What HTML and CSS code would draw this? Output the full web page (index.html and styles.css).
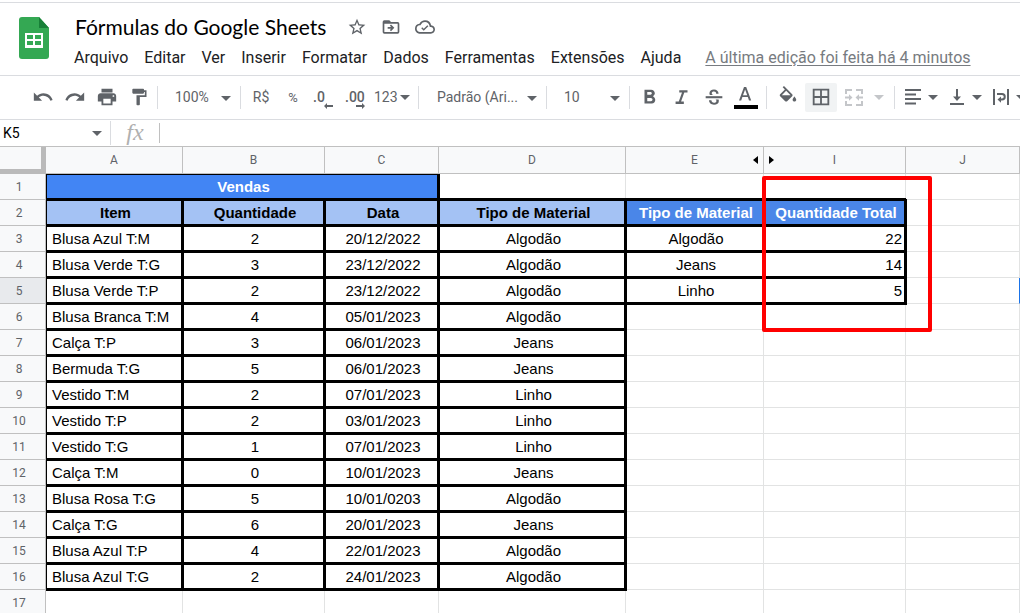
FILE: index.html
```html
<!DOCTYPE html>
<html lang="pt-BR">
<head>
<meta charset="utf-8">
<title>Fórmulas do Google Sheets</title>
<link rel="stylesheet" href="styles.css">
</head>
<body>
<header class="top">
  <a class="logo" href="#" aria-label="Planilhas">
    <svg width="30" height="42" viewBox="0 0 30 42"><path d="M3 0h17l10 11v28a3 3 0 0 1-3 3H3a3 3 0 0 1-3-3V3a3 3 0 0 1 3-3z" fill="#34a853"/><path d="M20 0l10 11H20z" fill="#188038"/><path d="M6 16h18v15H6zM8 18v4h6v-4zm8 0v4h6v-4zm-8 6v4h6v-4zm8 0v4h6v-4z" fill="#fff" fill-rule="evenodd"/></svg>
  </a>
  <div class="heading">
    <div class="title-row">
      <h1 class="title">Fórmulas do Google Sheets</h1>
      <button class="title-btn" aria-label="Marcar com estrela"><svg width="20" height="20" viewBox="0 0 24 24"><path d="M22 9.24l-7.19-.62L12 2 9.19 8.63 2 9.24l5.46 4.73L5.82 21 12 17.27 18.18 21l-1.63-7.03L22 9.24zM12 15.4l-3.76 2.27 1-4.28-3.32-2.88 4.38-.38L12 6.1l1.71 4.04 4.38.38-3.32 2.88 1 4.28L12 15.4z"/></svg></button>
      <button class="title-btn" aria-label="Mover"><svg width="20" height="20" viewBox="0 0 24 24"><path d="M20 6h-8l-2-2H4a2 2 0 0 0-2 2v12a2 2 0 0 0 2 2h16a2 2 0 0 0 2-2V8a2 2 0 0 0-2-2zm0 12H4V8h16v10z"/><path d="M8 12h4.2l-1.6-1.6L12 9l4 4-4 4-1.400-1.400 1.600-1.600H8z"/></svg></button>
      <button class="title-btn" aria-label="Salvo no Drive"><svg width="20" height="20" viewBox="0 0 24 24"><path d="M19.350 10.040A7.490 7.490 0 0 0 12 4C9.110 4 6.600 5.640 5.350 8.040A5.994 5.994 0 0 0 0 14c0 3.310 2.690 6 6 6h13c2.760 0 5-2.240 5-5 0-2.640-2.050-4.780-4.650-4.960zM19 18H6c-2.210 0-4-1.790-4-4 0-2.050 1.530-3.760 3.560-3.970l1.070-.11.5-.95A5.469 5.469 0 0 1 12 6c2.620 0 4.880 1.860 5.390 4.430l.3 1.500 1.530.11A2.980 2.980 0 0 1 22 15c0 1.650-1.350 3-3 3z"/><path d="M10.500 16.500L7.500 13.500l1.200-1.200 1.800 1.800 4.300-4.300 1.200 1.200z"/></svg></button>
    </div>
    <nav class="menu">
      <button>Arquivo</button><button>Editar</button><button>Ver</button><button>Inserir</button><button>Formatar</button><button>Dados</button><button>Ferramentas</button><button>Extensões</button><button>Ajuda</button>
      <a class="last-edit" href="#">A última edição foi feita há 4 minutos</a>
    </nav>
  </div>
</header>

<div class="toolbar" role="toolbar" aria-label="Formatação">
  <div class="group history">
    <button class="tool" aria-label="Desfazer"><svg width="22" height="22" viewBox="0 0 24 24"><path d="M12.500 8c-2.650 0-5.050.99-6.900 2.600L2 7v9h9l-3.620-3.620c1.390-1.160 3.160-1.880 5.120-1.880 3.540 0 6.550 2.310 7.600 5.500l2.370-.78C21.080 11.030 17.150 8 12.500 8z"/></svg></button>
    <button class="tool" aria-label="Refazer"><svg width="22" height="22" viewBox="0 0 24 24"><path d="M18.400 10.600C16.550 8.990 14.150 8 11.500 8c-4.650 0-8.580 3.030-9.960 7.220L3.900 16c1.050-3.190 4.050-5.500 7.600-5.500 1.950 0 3.730.72 5.120 1.880L13 16h9V7l-3.600 3.600z"/></svg></button>
    <button class="tool" aria-label="Imprimir"><svg width="22" height="22" viewBox="0 0 24 24"><path d="M19 8H5c-1.660 0-3 1.340-3 3v6h4v4h12v-4h4v-6c0-1.660-1.340-3-3-3zm-3 11H8v-5h8v5zm3-7c-.55 0-1-.45-1-1s.45-1 1-1 1 .45 1 1-.45 1-1 1zm-1-9H6v4h12V3z"/></svg></button>
    <button class="tool" aria-label="Pintar formatação"><svg width="20" height="20" viewBox="0 0 24 24"><path d="M18 4V3c0-.55-.45-1-1-1H5c-.55 0-1 .45-1 1v4c0 .55.45 1 1 1h12c.55 0 1-.45 1-1V6h1v4H9v11c0 .55.45 1 1 1h2c.55 0 1-.45 1-1v-9h8V4h-3z"/></svg></button>
  </div>
  <div class="group zoom"><label class="pick"><select aria-label="Zoom"><option>100%</option></select></label></div>
  <div class="group numbers">
    <button class="tool">R$</button>
    <button class="tool small">%</button>
    <button class="tool decimal" aria-label="Diminuir casas decimais"><span>.0</span><svg width="9" height="6" viewBox="0 0 9 6"><path d="M0 3l3-3v2h6v2H3v2z"/></svg></button>
    <button class="tool decimal" aria-label="Aumentar casas decimais"><span>.00</span><svg width="9" height="6" viewBox="0 0 9 6"><path d="M9 3L6 0v2H0v2h6v2z"/></svg></button>
    <button class="tool format">123<i class="caret"></i></button>
  </div>
  <div class="group font"><label class="pick"><select aria-label="Fonte"><option>Padrão (Ari...</option></select></label></div>
  <div class="group size"><label class="pick"><select aria-label="Tamanho da fonte"><option>10</option></select></label></div>
  <div class="group style">
    <button class="tool" aria-label="Negrito"><svg width="22" height="22" viewBox="0 0 24 24"><path d="M15.600 10.790c.97-.67 1.650-1.770 1.650-2.790 0-2.260-1.750-4-4-4H6v15h8.040c2.090 0 3.710-1.700 3.710-3.790 0-1.520-.86-2.820-2.150-3.420zM9 6.500h3.500c.83 0 1.500.67 1.500 1.500s-.67 1.500-1.500 1.500H9v-3zm4 10H9v-3.500h4c.96 0 1.750.79 1.750 1.750S13.960 16.500 13 16.500z"/></svg></button>
    <button class="tool" aria-label="Itálico"><svg width="22" height="22" viewBox="0 0 24 24"><path d="M9 4.500V7h3l-3.500 10H5v2.500h9V17h-3l3.500-10H18V4.500z"/></svg></button>
    <button class="tool" aria-label="Tachado"><svg width="20" height="20" viewBox="0 0 24 24"><path d="M2 11h20v2.500H2z"/><path d="M17.500 8c0-3-2.300-5-5.500-5S6.500 4.700 6.500 7.500c0 .9.200 1.600.6 2.200h4.200C9.800 9.200 9.300 8.500 9.300 7.500c0-1.300 1-2.100 2.700-2.100s2.600.9 2.600 2.600zM6 16c0 3.200 2.600 5.300 6 5.300s5.800-1.600 5.800-4.600c0-.7-.1-1.200-.3-1.700h-3.700c.7.4 1.100.9 1.100 1.700 0 1.400-1.100 2.200-2.900 2.200S8.900 18 8.900 16z"/></svg></button>
    <button class="tool" aria-label="Cor do texto"><svg width="24" height="28" viewBox="0 0 24 28"><path d="M10 4L5 17.500h2.200l1.200-3.400h5.400l1.200 3.400h2.200L12.200 4zm1.100 2.500l2.100 5.800H9z"/><path d="M0 22h24v4H0z" fill="#000"/></svg></button>
  </div>
  <div class="group fill">
    <button class="tool" aria-label="Cor de preenchimento"><svg width="22" height="22" viewBox="0 0 24 24"><path d="M16.560 8.940L7.620 0 6.210 1.410l2.380 2.380-5.150 5.150c-.59.59-.59 1.540 0 2.120l5.500 5.500c.29.29.68.44 1.060.44s.77-.15 1.060-.44l5.500-5.500c.59-.58.59-1.530 0-2.120zM5.210 10L10 5.210 14.790 10H5.210zM19 11.500s-2 2.170-2 3.500c0 1.100.9 2 2 2s2-.9 2-2c0-1.330-2-3.500-2-3.500z"/></svg></button>
    <button class="tool active" aria-label="Bordas"><svg width="22" height="22" viewBox="0 0 24 24"><path d="M3 3v18h18V3H3zm8 16H5v-6h6v6zm0-8H5V5h6v6zm8 8h-6v-6h6v6zm0-8h-6V5h6v6z"/></svg></button>
    <button class="tool" disabled aria-label="Mesclar células"><svg width="18" height="17" viewBox="0 0 18 17"><path d="M0 0h7v2H2v3H0zM11 0h7v5h-2V2h-5zM0 12h2v3h5v2H0zM16 12h2v5h-7v-2h5zM0 7.500h4V5.200l3.500 3.300L4 11.800V9.500H0zM18 7.500h-4V5.200l-3.500 3.300 3.500 3.300V9.500h4z"/></svg></button>
    <button class="tool mini" disabled aria-label="Tipo de mesclagem"><i class="caret"></i></button>
  </div>
  <div class="group align">
    <button class="tool drop" aria-label="Alinhamento horizontal"><svg width="16" height="16" viewBox="0 0 16 16"><path d="M0 0h16v2H0zM0 4.500h11v2H0zM0 9h16v2H0zM0 13.500h11v2H0z"/></svg><i class="caret"></i></button>
    <button class="tool drop" aria-label="Alinhamento vertical"><svg width="16" height="16" viewBox="0 0 16 16"><path d="M1 14h14v2H1zM7 0h2v7.500h3L8 12 4 7.500h3z"/></svg><i class="caret"></i></button>
    <button class="tool drop" aria-label="Ajuste de texto"><svg width="16" height="16" viewBox="0 0 16 16"><path d="M0 0h2v16H0zM14 0h2v16h-2zM4 4h5a3.500 3.500 0 0 1 0 7.500H8v2.300L4.500 10.500 8 7.500v2h1A1.700 1.700 0 0 0 9 6H4z"/></svg><i class="caret"></i></button>
  </div>
</div>

<div class="formula-bar">
  <div class="name-box"><input aria-label="Caixa de nome" value="K5"><button aria-label="Intervalos nomeados"><i class="caret"></i></button></div>
  <label class="fx" for="formula">fx</label>
  <input class="formula" id="formula" autocomplete="off">
</div>

<main class="sheet">
  <table class="grid">
    <colgroup><col class="c-head"><col class="c-a"><col class="c-b"><col class="c-c"><col class="c-d"><col class="c-e"><col class="c-i"><col></colgroup>
    <thead><tr><td class="corner"></td><th>A</th><th>B</th><th>C</th><th>D</th><th>E<button class="reveal left" aria-label="Mostrar colunas F a H"></button></th><th>I<button class="reveal right" aria-label="Mostrar colunas F a H"></button></th><th>J</th></tr></thead>
    <tbody>
      <tr><th>1</th><td class="box banner" colspan="3">Vendas</td><td></td><td></td><td></td><td></td></tr>
      <tr><th>2</th><td class="box light">Item</td><td class="box light">Quantidade</td><td class="box light">Data</td><td class="box light">Tipo de Material</td><td class="box blue">Tipo de Material</td><td class="box blue">Quantidade Total</td><td></td></tr>
      <tr><th>3</th><td class="box item">Blusa Azul T:M</td><td class="box">2</td><td class="box">20/12/2022</td><td class="box">Algodão</td><td class="box">Algodão</td><td class="box total">22</td><td></td></tr>
      <tr><th>4</th><td class="box item">Blusa Verde T:G</td><td class="box">3</td><td class="box">23/12/2022</td><td class="box">Algodão</td><td class="box">Jeans</td><td class="box total">14</td><td></td></tr>
      <tr><th class="current">5</th><td class="box item">Blusa Verde T:P</td><td class="box">2</td><td class="box">23/12/2022</td><td class="box">Algodão</td><td class="box">Linho</td><td class="box total">5</td><td class="by-cursor"></td></tr>
      <tr><th>6</th><td class="box item">Blusa Branca T:M</td><td class="box">4</td><td class="box">05/01/2023</td><td class="box">Algodão</td><td></td><td></td><td></td></tr>
      <tr><th>7</th><td class="box item">Calça T:P</td><td class="box">3</td><td class="box">06/01/2023</td><td class="box">Jeans</td><td></td><td></td><td></td></tr>
      <tr><th>8</th><td class="box item">Bermuda T:G</td><td class="box">5</td><td class="box">06/01/2023</td><td class="box">Jeans</td><td></td><td></td><td></td></tr>
      <tr><th>9</th><td class="box item">Vestido T:M</td><td class="box">2</td><td class="box">07/01/2023</td><td class="box">Linho</td><td></td><td></td><td></td></tr>
      <tr><th>10</th><td class="box item">Vestido T:P</td><td class="box">2</td><td class="box">03/01/2023</td><td class="box">Linho</td><td></td><td></td><td></td></tr>
      <tr><th>11</th><td class="box item">Vestido T:G</td><td class="box">1</td><td class="box">07/01/2023</td><td class="box">Linho</td><td></td><td></td><td></td></tr>
      <tr><th>12</th><td class="box item">Calça T:M</td><td class="box">0</td><td class="box">10/01/2023</td><td class="box">Jeans</td><td></td><td></td><td></td></tr>
      <tr><th>13</th><td class="box item">Blusa Rosa T:G</td><td class="box">5</td><td class="box">10/01/0203</td><td class="box">Algodão</td><td></td><td></td><td></td></tr>
      <tr><th>14</th><td class="box item">Calça T:G</td><td class="box">6</td><td class="box">20/01/2023</td><td class="box">Jeans</td><td></td><td></td><td></td></tr>
      <tr><th>15</th><td class="box item">Blusa Azul T:P</td><td class="box">4</td><td class="box">22/01/2023</td><td class="box">Algodão</td><td></td><td></td><td></td></tr>
      <tr><th>16</th><td class="box item">Blusa Azul T:G</td><td class="box">2</td><td class="box">24/01/2023</td><td class="box">Algodão</td><td></td><td></td><td></td></tr>
      <tr><th>17</th><td></td><td></td><td></td><td></td><td></td><td></td><td></td></tr>
    </tbody>
  </table>
  <div class="highlight"></div>
</main>
</body>
</html>
```
FILE: styles.css
```css
* { box-sizing: border-box; }
body {
  margin: 0;
  height: 100vh;
  display: flex;
  flex-direction: column;
  overflow: hidden;
  background: #fff;
  color: #202124;
  font-family: Roboto, sans-serif;
}
button, input, select {
  font: inherit;
  color: inherit;
  border: 0;
  padding: 0;
  margin: 0;
  background: none;
  outline: 0;
}
svg { display: block; fill: currentColor; flex: none; }

/* Title and menus */
.top {
  display: flex;
  flex: none;
  margin-top: 2px;
  height: 74px;
  padding: 9px 20px 0 19px;
  border-top: 1px solid #dadce0;
  border-bottom: 1px solid #dadce0;
}
.logo { padding-top: 5px; }
.heading { padding-left: 25px; }
.title-row { display: flex; align-items: center; height: 29px; color: #5f6368; }
.title {
  margin: 0 14px 0 1px;
  font: 400 21px/28px Lato, sans-serif;
  color: #000;
  white-space: nowrap;
}
.title-btn { width: 34px; height: 28px; display: flex; align-items: center; justify-content: center; }
.menu { display: flex; gap: 16px; height: 32px; align-items: center; font-size: 16px; white-space: nowrap; }
.last-edit { margin-left: 8px; color: #777b80; text-underline-offset: 2px; }

/* Toolbar */
.toolbar {
  display: flex;
  flex: none;
  align-items: center;
  height: 44px;
  padding-bottom: 1px;
  border-bottom: 1px solid #dadce0;
  color: #5f6368;
  font-size: 14px;
  overflow: hidden;
}
.group { display: flex; flex: none; align-items: center; height: 23px; border-right: 1px solid #dadce0; }
.tool {
  display: flex;
  flex: none;
  align-items: center;
  justify-content: center;
  width: 32px;
  height: 29px;
  border-radius: 2px;
}
.tool:disabled { color: #c4c6c9; }
.tool.active { background: #f1f3f4; }
.small { font-size: 13px; }
.caret {
  flex: none;
  border: 5px solid transparent;
  border-top-color: currentColor;
  border-bottom: 0;
}
.history { width: 158px; padding-left: 27px; }
.zoom { width: 83px; padding-left: 17px; }
.numbers { width: 178px; padding-left: 4px; }
.font { width: 128px; padding-left: 18px; }
.size { width: 83px; padding-left: 17px; }
.style { width: 137px; padding-left: 4px; }
.fill { width: 128px; padding-left: 5px; gap: 1px; }
.align { padding-left: 10px; border: 0; }
.pick { position: relative; width: 100%; }
.pick select { width: 100%; appearance: none; }
.pick::after {
  content: "";
  position: absolute;
  right: 9px;
  top: 7px;
  border: 5px solid transparent;
  border-top-color: #5f6368;
  border-bottom: 0;
  pointer-events: none;
}
.decimal { position: relative; justify-content: flex-start; padding-left: 4px; font-weight: 500; }
.decimal svg { position: absolute; right: 8px; bottom: 3px; }
.tool.format { width: 44px; gap: 2px; justify-content: flex-start; padding-left: 1px; }
.tool.mini { width: 16px; }
.tool.drop { width: 44px; gap: 7px; justify-content: flex-start; }

/* Formula bar */
.formula-bar { display: flex; flex: none; align-items: center; height: 27px; border-bottom: 1px solid #c0c0c0; }
.name-box {
  display: flex;
  align-items: center;
  width: 111px;
  height: 24px;
  padding: 0 8px 0 3px;
  border-right: 1px solid #dadce0;
  font-size: 14px;
  color: #000;
}
.name-box input { flex: 1; min-width: 0; }
.name-box .caret { display: block; color: #5f6368; }
.fx {
  width: 49px;
  height: 20px;
  border-right: 1px solid #c0c0c0;
  text-align: center;
  font: italic 24px/18px "Liberation Serif", serif;
  color: #b0b0b0;
}
.formula { flex: 1; padding: 0 8px; font-size: 14px; }

/* Grid */
.sheet { position: relative; flex: 1; min-height: 0; overflow: hidden; }
.grid {
  width: 100%;
  table-layout: fixed;
  border-collapse: separate;
  border-spacing: 0;
  font: 15px/20px "Liberation Sans", Arial, sans-serif;
  color: #000;
}
.c-head { width: 46px; }
.c-a { width: 137px; }
.c-b { width: 142px; }
.c-c { width: 114px; }
.c-d { width: 187px; }
.c-e { width: 138px; }
.c-i { width: 142px; }
.grid td, .grid th {
  height: 26px;
  padding: 0 0 0 3px;
  border: solid #e2e3e3;
  border-width: 0 1px 1px 0;
  text-align: center;
  white-space: nowrap;
}
.grid thead tr > * { height: 27px; }
.grid th, .grid .corner {
  position: relative;
  z-index: 2;
  padding: 0;
  background: #f8f9fa;
  border-color: #c0c0c0;
  color: #5f6368;
  font: 12px/20px Roboto, sans-serif;
}
.grid tbody th { padding-right: 7px; }
.grid .corner { border-width: 0 5px 5px 0; border-color: #bababa; }
.grid .current { background: #e8eaed; }

/* Thick outlines reach one pixel past the gridline on every side */
.grid .box {
  position: relative;
  z-index: 1;
  border-color: #000;
  box-shadow: inset 0 0 0 1px #000, 0 0 0 1px #000, -1px -1px 0 1px #000;
}
.grid .banner { background: #4285f4; color: #fff; font-weight: 700; }
.grid .light { background: #a4c2f4; font-weight: 700; }
.grid .blue { background: #4a86e8; color: #fff; font-weight: 700; }
.grid .item { text-align: left; padding-left: 6px; }
.grid .total { text-align: right; padding-right: 3px; }
.grid .by-cursor { border-right-color: #1a73e8; }

.reveal {
  position: absolute;
  top: 9px;
  border: 4px solid transparent;
}
.reveal.left { right: 5px; border-right: 5px solid #000; border-left: 0; }
.reveal.right { left: 5px; border-left: 5px solid #000; border-right: 0; }

.highlight {
  position: absolute;
  left: 762px;
  top: 29px;
  width: 170px;
  height: 156px;
  z-index: 3;
  border: 4px solid #f00;
  border-radius: 2px;
  pointer-events: none;
}
```
